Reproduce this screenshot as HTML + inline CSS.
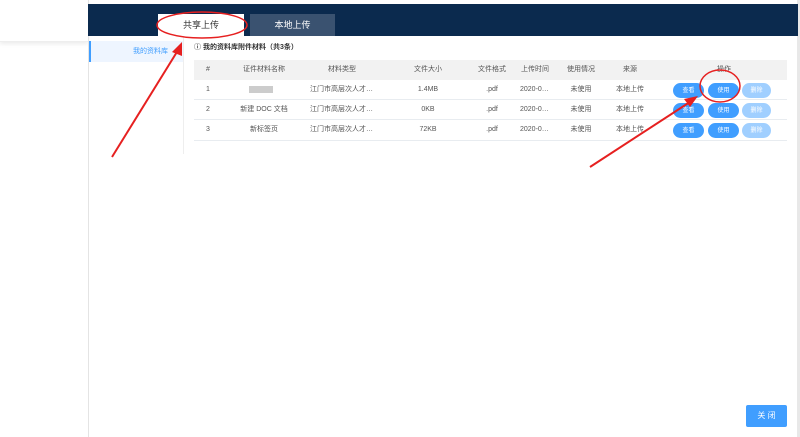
<!DOCTYPE html>
<html><head><meta charset="utf-8"><style>
*{margin:0;padding:0;box-sizing:border-box}
body{width:800px;height:437px;background:#fff;font-family:"Liberation Sans","Noto Sans CJK SC",sans-serif;position:relative;overflow:hidden;font-size:7px;color:#555}
.a{position:absolute}
.hdr{left:88px;top:4px;width:710px;height:32px;background:#0b2a4e}
.tab{top:14px;height:22px;width:86px;text-align:center;line-height:22px;font-size:9px}
.row{left:194px;width:593px;height:20px;border-bottom:1px solid #e8ecf0}
.c{position:absolute;top:0;line-height:20px;text-align:center;white-space:nowrap}
.b{position:absolute;top:3px;height:15px;width:31px;border-radius:8px;background:#409eff;color:#fff;display:flex;align-items:center;justify-content:center;font-size:6px;line-height:1}
</style></head><body>
<div class="a" style="left:0;top:0;width:88px;height:42px;border-bottom:1px solid #eee;box-shadow:0 2px 4px rgba(0,0,0,.08)"></div>
<div class="a" style="left:88px;top:0;width:1px;height:437px;background:#e4e4e4"></div>
<div class="a" style="left:797px;top:0;width:3px;height:437px;background:#e8e8e8"></div>
<div class="a hdr"></div>
<div class="a tab" style="left:158px;background:#fff;color:#333">共享上传</div>
<div class="a tab" style="left:250px;width:85px;background:#3a5270;color:#fff">本地上传</div>
<div class="a" style="left:183px;top:36px;width:1px;height:118px;background:#eee"></div>
<div class="a" style="left:89px;top:41px;width:94px;height:21px;background:#eef5ff;border-left:2px solid #409eff;color:#409eff;font-size:7px;line-height:21px;padding-left:42px;white-space:nowrap;overflow:hidden">我的资料库</div>
<div class="a" style="left:194px;top:42px;font-size:7px;color:#333;font-weight:bold">ⓘ 我的资料库附件材料（共3条）</div>
<div class="a row" style="top:60px;background:#f2f2f2;border:none">
<div class="c" style="left:8px;width:12px">#</div><div class="c" style="left:40px;width:60px">证件材料名称</div><div class="c" style="left:118px;width:60px">材料类型</div><div class="c" style="left:214px;width:40px">文件大小</div><div class="c" style="left:278px;width:40px">文件格式</div><div class="c" style="left:321px;width:40px">上传时间</div><div class="c" style="left:367px;width:40px">使用情况</div><div class="c" style="left:416px;width:40px">来源</div><div class="c" style="left:510px;width:40px">操作</div></div>
<div class="a row" style="top:80px"><div class="c" style="left:8px;width:12px">1</div><div class="c" style="left:52px;width:30px"><span style="display:inline-block;width:24px;height:7px;background:#ccc;vertical-align:middle"></span></div><div class="c" style="left:116px">江门市高层次人才…</div><div class="c" style="left:214px;width:40px">1.4MB</div><div class="c" style="left:278px;width:40px">.pdf</div><div class="c" style="left:326px">2020-0…</div><div class="c" style="left:367px;width:40px">未使用</div><div class="c" style="left:416px;width:40px">本地上传</div><div class="b" style="left:479px">查看</div><div class="b" style="left:514px">使用</div><div class="b" style="left:548px;width:29px;background:#a0cfff">删除</div></div>
<div class="a row" style="top:100px"><div class="c" style="left:8px;width:12px">2</div><div class="c" style="left:40px;width:60px">新建 DOC 文档</div><div class="c" style="left:116px">江门市高层次人才…</div><div class="c" style="left:214px;width:40px">0KB</div><div class="c" style="left:278px;width:40px">.pdf</div><div class="c" style="left:326px">2020-0…</div><div class="c" style="left:367px;width:40px">未使用</div><div class="c" style="left:416px;width:40px">本地上传</div><div class="b" style="left:479px">查看</div><div class="b" style="left:514px">使用</div><div class="b" style="left:548px;width:29px;background:#a0cfff">删除</div></div>
<div class="a row" style="top:120px;height:21px"><div class="c" style="left:8px;width:12px">3</div><div class="c" style="left:40px;width:60px">新标签页</div><div class="c" style="left:116px">江门市高层次人才…</div><div class="c" style="left:214px;width:40px">72KB</div><div class="c" style="left:278px;width:40px">.pdf</div><div class="c" style="left:326px">2020-0…</div><div class="c" style="left:367px;width:40px">未使用</div><div class="c" style="left:416px;width:40px">本地上传</div><div class="b" style="left:479px">查看</div><div class="b" style="left:514px">使用</div><div class="b" style="left:548px;width:29px;background:#a0cfff">删除</div></div>
<div class="a" style="left:746px;top:405px;width:41px;height:22px;background:#409eff;border-radius:2px;color:#fff;font-size:8px;text-align:center;line-height:22px">关 闭</div>
<svg class="a" style="left:0;top:0" width="800" height="437">
<ellipse cx="202" cy="25" rx="45" ry="13" fill="none" stroke="#e62020" stroke-width="1.5"/>
<line x1="112" y1="157" x2="180" y2="47" stroke="#e62020" stroke-width="2"/>
<polygon points="182,42 172,52 182,56" fill="#e62020"/>
<ellipse cx="720" cy="86" rx="20" ry="16" fill="none" stroke="#e62020" stroke-width="1.5"/>
<line x1="590" y1="167" x2="693" y2="100" stroke="#e62020" stroke-width="2"/>
<polygon points="698,96 684,99 690,107" fill="#e62020"/>
</svg>
</body></html>
